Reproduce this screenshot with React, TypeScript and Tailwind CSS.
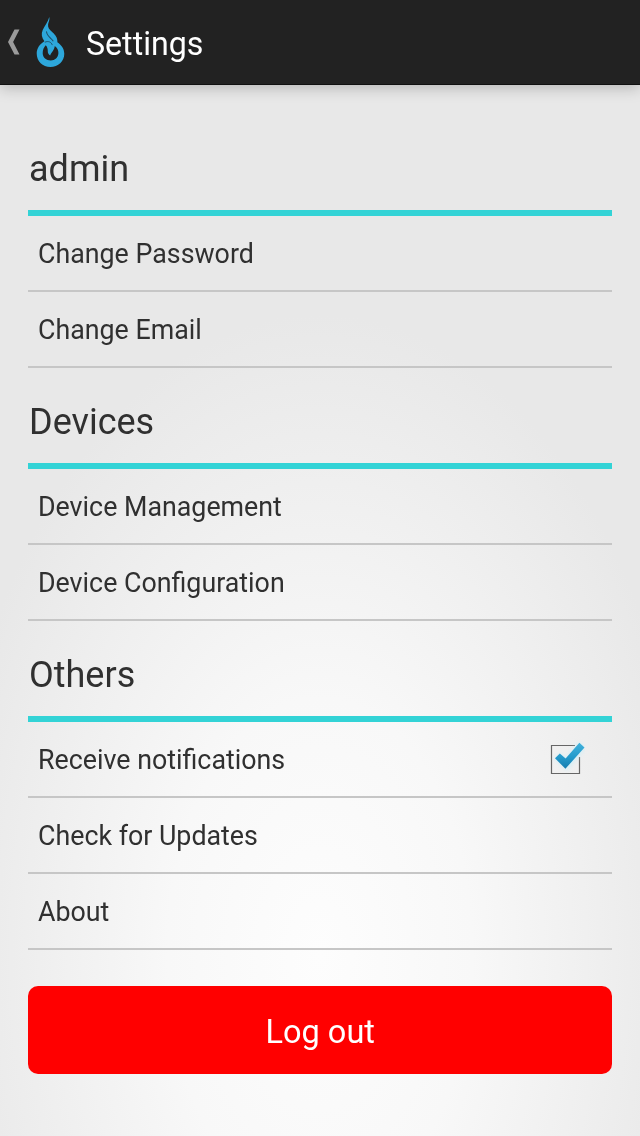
import type { ReactNode } from 'react';

function BackChevron() {
  return (
    <svg className="ml-[7px] h-[28px] w-[14px] shrink-0" viewBox="0 0 14 28" aria-hidden="true">
      <path d="M7.5 1.5h5L6.1 14l6.4 12.5h-5L1 14z" fill="#9b9b9b" />
    </svg>
  );
}

function Flame() {
  return (
    <svg className="ml-[14px] h-[52px] w-[32px] shrink-0" viewBox="0 0 32 52" aria-hidden="true">
      <path
        d="M14.3 1C12.8 6.5 9.6 10 7.7 14C6 18 6.7 21.6 9.4 25.2C4.6 28 1.7 32.6 1.7 37.6C1.7 45.5 7.7 51 15.4 51C23.2 51 29.3 45.3 29.3 37.8C29.3 32.3 26.2 29 22.4 26.2C22.6 21.6 20.6 19.2 17.4 16.2C14.2 13.3 12.6 11.5 13.1 8.2C13.5 5.8 15 3.6 14.3 1ZM10.7 29.3C12.4 31 12.9 33.2 12.8 35.5C12.8 37.2 13.7 38.4 15.2 39.5C15.8 36.6 19.3 34.4 19.8 29.9C22.3 31.9 23.6 34.3 23.4 37.2C23.1 41.6 19.9 44.4 15.8 44.4C11.2 44.4 7.8 41.6 7.7 37.2C7.6 34 8.8 31.5 10.7 29.3Z"
        fill="#2da7db"
        fillRule="evenodd"
      />
      <path d="M11.5 15.8C11.9 19.8 15.5 21.8 18 24.8" fill="none" stroke="#1d506a" strokeWidth="1.1" strokeLinecap="round" />
      <path d="M10.2 26.1C13 24.7 16.2 25.8 17.2 28.7" fill="none" stroke="#1d506a" strokeWidth="0.9" strokeLinecap="round" />
    </svg>
  );
}

function Checkbox() {
  return (
    <svg role="checkbox" aria-checked="true" aria-label="Receive notifications" className="h-[44px] w-[40px] shrink-0" viewBox="0 0 40 44">
      <defs>
        <linearGradient id="check-fill" x1="0" y1="0" x2="0" y2="1">
          <stop offset="0" stopColor="#42b2dc" />
          <stop offset="0.55" stopColor="#249acb" />
          <stop offset="1" stopColor="#147caf" />
        </linearGradient>
        <filter id="check-glow" x="-30%" y="-30%" width="160%" height="160%">
          <feGaussianBlur stdDeviation="2" />
        </filter>
      </defs>
      <path d="M30 8.5H6.5v28h28V20" fill="none" stroke="#666" strokeWidth="1.2" />
      <path d="M11 22l4-4 6 5 13-16 5 4-17 21z" fill="#c9eef9" stroke="#c9eef9" strokeWidth="2" opacity="0.75" filter="url(#check-glow)" />
      <path d="M10 21.2L14.8 16.5L20.6 21.6L34.4 5.8L39.5 10.4L20.4 31.8Z" fill="url(#check-fill)" />
    </svg>
  );
}

function Section({ title, children }: { title: string; children: ReactNode }) {
  return (
    <section>
      <h2 className="flex h-[101px] items-center border-b-[6px] border-[#33d3d6] pt-3 pl-px text-[37.5px] font-normal leading-none">
        <span className="origin-left scale-x-[0.96]">{title}</span>
      </h2>
      {children}
    </section>
  );
}

function Row({ label, children }: { label: string; children?: ReactNode }) {
  return (
    <div className="flex h-[76px] items-center justify-between border-b-2 border-[#c6c6c6] pl-[9.5px] pr-[27px] text-[28px] leading-none">
      <span className="origin-left scale-x-[0.957] pt-px">{label}</span>
      {children}
    </div>
  );
}

export default function App() {
  return (
    <div className="flex h-[1136px] w-[640px] flex-col bg-[radial-gradient(ellipse_380px_640px_at_50%_84%,#fdfdfd_0%,#f8f8f8_40%,#ececec_85%,#e8e8e8_100%)] font-['Roboto',sans-serif] text-[#303030]">
      <header className="flex h-[85px] shrink-0 items-center border-b border-[#111] bg-[#222] text-white shadow-[0_3px_14px_rgba(0,0,0,0.22)]">
        <BackChevron />
        <Flame />
        <h1 className="ml-[19px] origin-left scale-x-[0.945] pt-px text-[34px] font-normal leading-none">Settings</h1>
      </header>
      <main className="px-7 pt-[30px]">
        <Section title="admin">
          <Row label="Change Password" />
          <Row label="Change Email" />
        </Section>
        <Section title="Devices">
          <Row label="Device Management" />
          <Row label="Device Configuration" />
        </Section>
        <Section title="Others">
          <Row label="Receive notifications">
            <Checkbox />
          </Row>
          <Row label="Check for Updates" />
          <Row label="About" />
        </Section>
        <button className="mt-9 flex h-[88px] w-full items-center justify-center rounded-[10px] bg-[#f00] text-[34px] leading-none text-white">
          <span className="scale-x-[0.955] pt-px">Log out</span>
        </button>
      </main>
    </div>
  );
}
